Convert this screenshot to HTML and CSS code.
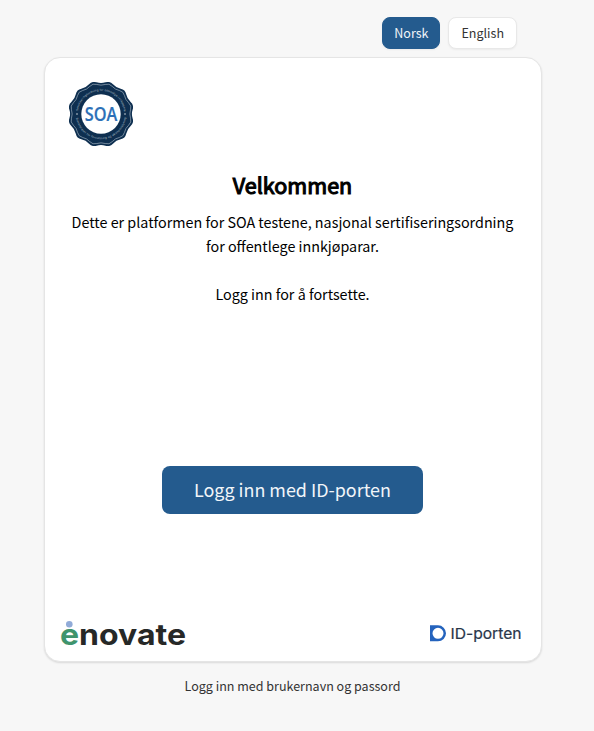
FILE: index.html
```html
<!DOCTYPE html>
<html lang="no">
<head>
<meta charset="utf-8">
<title>Velkommen</title>
<link rel="stylesheet" href="styles.css">
</head>
<body>
<main class="page">
  <nav class="languages">
    <button class="lang lang-active">Norsk</button>
    <button class="lang">English</button>
  </nav>
  <section class="card">
    <svg class="badge" viewBox="-32 -32 64 64" role="img" aria-label="SOA">
      <defs>
        <path id="wave" d="M-4.27-30.44Q0-29 4.27-30.44Q8.54-31.88 11.52-28.5Q14.5-25.11 18.92-24.22Q23.33-23.33 24.22-18.92Q25.11-14.5 28.5-11.52Q31.88-8.54 30.44-4.27Q29 0 30.44 4.27Q31.88 8.54 28.5 11.52Q25.11 14.5 24.22 18.92Q23.33 23.33 18.92 24.22Q14.5 25.11 11.52 28.5Q8.54 31.88 4.27 30.44Q0 29-4.27 30.44Q-8.54 31.88-11.52 28.5Q-14.5 25.11-18.92 24.22Q-23.33 23.33-24.22 18.92Q-25.11 14.5-28.5 11.52Q-31.88 8.54-30.44 4.27Q-29 0-30.44-4.27Q-31.88-8.54-28.5-11.52Q-25.11-14.5-24.22-18.92Q-23.33-23.33-18.92-24.22Q-14.5-25.11-11.52-28.5Q-8.54-31.88-4.27-30.44Z"/>
        <path id="upper" d="M-23.2 0A23.2 23.2 0 0 1 23.2 0"/>
        <path id="lower" d="M-25.2 0A25.2 25.2 0 0 0 25.2 0"/>
      </defs>
      <use href="#wave" fill="#0e2f50" transform="scale(1.04)"/>
      <use href="#wave" fill="none" stroke="#8fa0b1" stroke-width=".8" transform="scale(.97)"/>
      <circle r="19.7" fill="#fff"/>
      <text class="ring"><textPath href="#upper" startOffset="3" textLength="67">Sertifiseringsordning for offentlige innkjøpere</textPath></text>
      <text class="ring"><textPath href="#lower" startOffset="4" textLength="71">Direktoratet for forvaltning og økonomistyring</textPath></text>
      <circle cx="-24" r=".7" fill="#fff"/><circle cx="24" r=".7" fill="#fff"/>
      <text class="soa" y="6.8" textLength="32.5" lengthAdjust="spacingAndGlyphs">SOA</text>
    </svg>
    <div class="intro">
      <h1>Velkommen</h1>
      <p>Dette er platformen for SOA testene, nasjonal sertifiseringsordning for offentlege innkjøparar.</p>
      <p>Logg inn for å fortsette.</p>
    </div>
    <button class="login">Logg inn med ID-porten</button>
    <footer class="logos">
      <svg class="enovate" viewBox="0 0 126 28" role="img" aria-label="enovate">
        <text class="wordmark" x="-1" y="24.8" textLength="126" lengthAdjust="spacingAndGlyphs"><tspan fill="#3f946d">e</tspan>novate</text>
        <circle cx="8.3" cy="4.2" r="3.3" fill="#91abd8"/>
      </svg>
      <svg class="idporten" viewBox="0 0 92 20" role="img" aria-label="ID-porten">
        <path fill="#2463bd" fill-rule="evenodd" d="M0 1.3H8a8 8 0 0 1 0 16H0ZM8 3.8a5.5 5.5 0 1 0 0 11a5.5 5.5 0 0 0 0-11Z"/>
        <text class="idtext" x="20.5" y="14.7" textLength="71" lengthAdjust="spacingAndGlyphs">ID-porten</text>
      </svg>
    </footer>
  </section>
  <a class="password">Logg inn med brukernavn og passord</a>
</main>
</body>
</html>
```
FILE: styles.css
```css
* { box-sizing: border-box; }
body {
  margin: 0;
  background: #f7f7f7;
  color: #000;
  font: 400 14.33px/24px "Noto Sans CJK SC", sans-serif;
}
.page {
  width: 498px;
  margin-left: 44px;
  padding-top: 17px;
  display: flex;
  flex-direction: column;
}
button { font-family: inherit; cursor: pointer; }
.languages {
  display: flex;
  justify-content: flex-end;
  gap: 8px;
  padding-right: 25px;
  margin-bottom: 8px;
}
.lang {
  height: 32px;
  padding: 0 12px 1px;
  border: 1px solid #e8e8e8;
  border-radius: 8px;
  background: #fff;
  color: #333;
  font-size: 12.53px;
  box-shadow: 0 1px 2px rgba(0, 0, 0, .05);
}
.lang-active { padding: 0 11px 1px; background: #245b8e; border-color: #245b8e; color: #f1f5f9; }
.card {
  height: 605px;
  display: flex;
  flex-direction: column;
  align-items: center;
  padding: 24px 17px 13px 16px;
  background: #fff;
  border: 1px solid #e5e5e5;
  border-radius: 16px;
  box-shadow: 0 1px 2px rgba(0, 0, 0, .12);
}
.badge { width: 64px; height: 64px; align-self: flex-start; margin-left: 8px; }
.ring { font: 400 2.9px "Liberation Sans", sans-serif; fill: #b8c3cf; }
.soa { font: 600 19.5px "Open Sans", sans-serif; fill: #2c70b7; stroke: #2c70b7; stroke-width: .2px; text-anchor: middle; }
.intro { margin-top: 23px; padding: 0 8px; text-align: center; }
h1 { margin: 0 0 9px; font-size: 21.5px; font-weight: 400; line-height: 32px; -webkit-text-stroke: 1.1px #000; }
p { margin: 0 0 24px; }
.login {
  width: 261px;
  height: 48px;
  margin-top: 136px;
  padding: 0 0 2px;
  border: 0;
  border-radius: 8px;
  background: #245b8e;
  color: #f1f5f9;
  font-size: 17.91px;
}
.logos { width: 100%; margin-top: auto; display: flex; justify-content: space-between; align-items: center; padding-right: 2px; }
.enovate { width: 126px; height: 28px; overflow: visible; }
.wordmark { font: 700 29px "Inter", sans-serif; fill: #262827; }
.idporten { width: 92px; height: 20px; }
.idtext { font: 400 15px "Inter", sans-serif; fill: #29364a; stroke: #29364a; stroke-width: .2px; }
.password { margin-top: 12px; padding-right: 1px; text-align: center; color: #333; font-size: 12.53px; }
```
